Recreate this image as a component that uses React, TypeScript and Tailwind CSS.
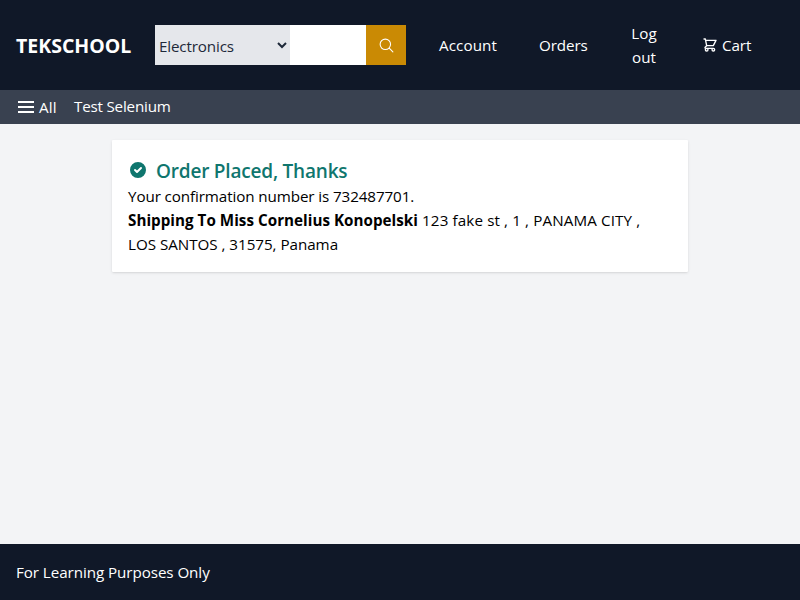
import { HiCheckCircle, HiOutlineShoppingCart } from "react-icons/hi";
import { IoSearchOutline } from "react-icons/io5";

function MenuIcon() {
  return (
    <svg viewBox="0 0 20 20" className="size-5" fill="none" stroke="currentColor" strokeWidth="2">
      <path d="M2 5h16M2 10h16M2 15h16" />
    </svg>
  );
}

function Header() {
  return (
    <header className="flex h-[90px] items-center bg-gray-900 text-white">
      <a className="ml-4 w-[139px] shrink-0 pt-0.5 text-[19.5px] leading-7 font-bold">TEKSCHOOL</a>
      <div className="flex h-10 w-[251px] shrink-0">
        <select className="h-10 w-[135px] bg-gray-200 pt-0.5 tracking-[-0.15px] text-gray-800" defaultValue="Electronics">
          <option>Electronics</option>
        </select>
        <input className="h-10 w-[76px] bg-white px-2 text-black outline-none" />
        <button className="flex w-10 items-center justify-center bg-[#ca8a04]" aria-label="Search">
          <IoSearchOutline className="size-[17px]" />
        </button>
      </div>
      <nav className="flex flex-1 items-center pb-px">
        <a className="ml-[33px] w-[60px] tracking-[0.1px]">Account</a>
        <a className="ml-10 w-[50px] tracking-[-0.1px]">Orders</a>
        <a className="ml-[39px] w-[32px] text-center">Log out</a>
        <a className="ml-[41px] flex items-center gap-1 pl-px tracking-[-0.1px]">
          <HiOutlineShoppingCart className="size-4" />
          Cart
        </a>
      </nav>
    </header>
  );
}

export default function App() {
  return (
    <div className="flex h-[600px] flex-col bg-gray-100 font-['Segoe_UI','Open_Sans',sans-serif] text-[15.2px] leading-6 text-black">
      <Header />
      <div className="flex h-[34px] items-center bg-[#394150] pl-4 text-white">
        <MenuIcon />
        <span className="ml-[3px] w-[35px] tracking-[0.2px]">All</span>
        <span className="pb-0.5 tracking-[-0.2px]">Test Selenium</span>
      </div>
      <main className="flex-1 pt-4">
        <section className="mx-auto h-[132px] w-[576px] rounded-[1px] bg-white px-4 pt-4 shadow-sm">
          <div className="flex h-7 items-center gap-2 pt-0.5 font-semibold text-[#0f766e]">
            <HiCheckCircle className="-mt-0.5 size-5" />
            <h1 className="text-[19px] leading-7 tracking-[-0.2px]">Order Placed, Thanks</h1>
          </div>
          <p className="tracking-[-0.1px]">Your confirmation number is 732487701.</p>
          <p className="whitespace-nowrap">
            <span className="font-bold tracking-[0.03px]">Shipping To Miss Cornelius Konopelski</span>
            <span className="tracking-[0.12px]"> 123 fake st , 1 , PANAMA CITY ,</span>
          </p>
          <p className="tracking-[-0.03px]">LOS SANTOS , 31575, Panama</p>
        </section>
      </main>
      <footer className="flex h-14 items-center bg-gray-900 px-4 text-white">
        <span className="pb-px tracking-[-0.07px]">For Learning Purposes Only</span>
      </footer>
    </div>
  );
}
